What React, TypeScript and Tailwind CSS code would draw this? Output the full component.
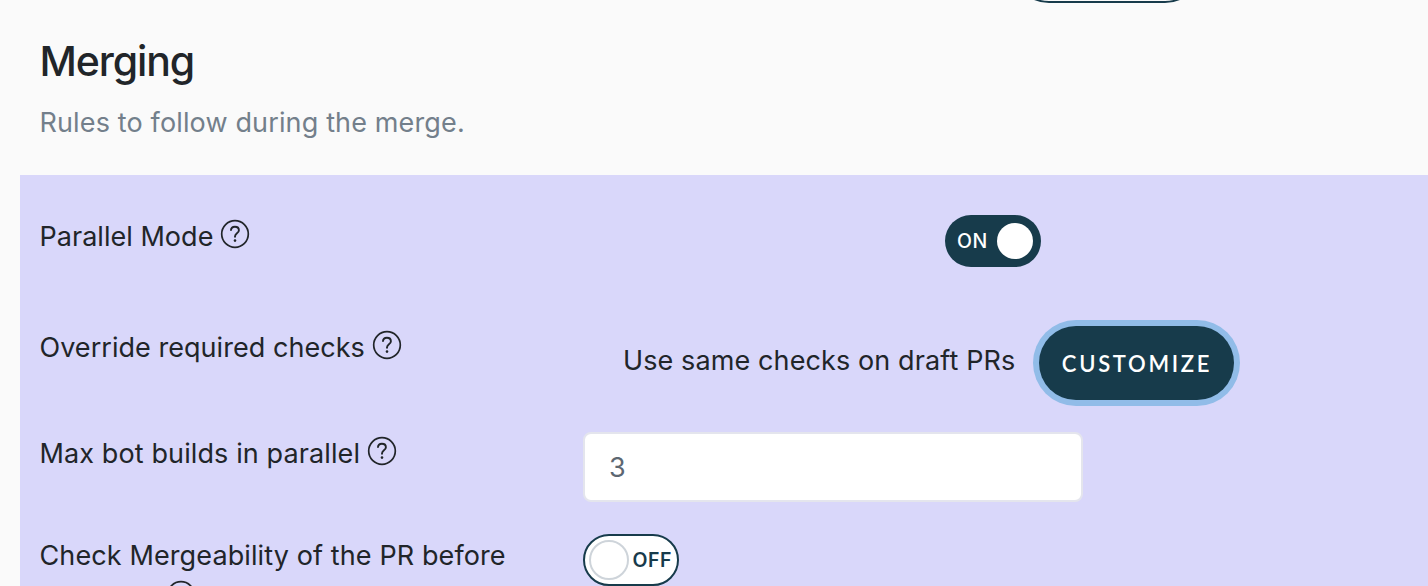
import React from "react";

function Help() {
  return (
    <svg width="30" height="30" viewBox="0 0 30 30" className="mb-1.5 shrink-0" fill="none" stroke="#212529">
      <circle cx="15" cy="15" r="13.3" strokeWidth="1.7" />
      <path d="M10.9 11.7C11 9.1 12.6 7.7 14.9 7.7C17.3 7.7 18.9 9.1 18.9 11.2C18.9 14.4 15 14.3 15 17.5V18.4" strokeWidth="1.9" />
      <circle cx="15" cy="21.6" r="1.3" fill="#212529" stroke="none" />
    </svg>
  );
}

export default function App() {
  return (
    <div className="h-[586px] w-full overflow-hidden bg-[#fafafa] font-['Inter',sans-serif] text-[27px] text-[#212529]">
      <div className="flex h-[3px] items-end pl-[1012px]">
        <div className="h-[74px] w-[190px] shrink-0 rounded-[37px] border-2 border-[#173b4b]" />
      </div>
      <header className="h-[172px] pl-[39.5px] pt-[33px]">
        <h1 className="text-[41px] font-medium leading-[50px] tracking-[-1.1px]">Merging</h1>
        <p className="mt-[17px] leading-[40px] tracking-[0.14px] text-[#737f8b]">Rules to follow during the merge.</p>
      </header>
      <main className="ml-5 h-[411px] overflow-hidden bg-[#d9d7fa] pl-[19.5px] pt-10">
        <div className="flex h-[111px] items-start">
          <div className="flex w-[905.5px] items-center gap-[7px] leading-[44px]">
            <span className="tracking-[0.03px]">Parallel Mode</span><Help />
          </div>
          <div className="flex h-[52px] w-24 items-center justify-between rounded-full bg-[#173b4b] pl-3 pr-2 text-[19.5px] font-medium tracking-[0.5px] text-white">
            <span className="pt-0.5">ON</span><span className="size-9 rounded-full bg-white" />
          </div>
        </div>
        <div className="flex h-[106px] items-start">
          <div className="flex w-[583.5px] items-center gap-[7px] leading-[44px]">
            <span className="tracking-[0.04px]">Override required checks</span><Help />
          </div>
          <span className="mt-[14px] w-[416px] whitespace-nowrap leading-[42px] tracking-[0.11px]">Use same checks on draft PRs</span>
          <button className="h-[74px] w-[195px] rounded-full bg-[#173b4b] pl-px pt-px font-['Lato',sans-serif] text-[22px] font-semibold tracking-[2.7px] text-white ring-6 ring-[#91bce8]">CUSTOMIZE</button>
        </div>
        <div className="flex h-[102px] items-start">
          <div className="flex w-[543.5px] items-center gap-[7px] leading-[44px]">
            <span className="tracking-[0.11px]">Max bot builds in parallel</span><Help />
          </div>
          <div className="flex h-[70px] w-[500px] items-center rounded-lg border-2 border-[#e4e5ed] bg-white pl-6 pt-0.5 text-[#5d6772]">3</div>
        </div>
        <div className="flex items-start">
          <div className="w-[543.5px]">
            <div className="leading-[44px] tracking-[0.11px]">Check Mergeability of the PR before</div>
            <div className="flex pl-[126px] pt-0.5"><Help /></div>
          </div>
          <div className="flex h-[52px] w-24 items-center justify-between rounded-full border-2 border-[#173b4b] bg-white pl-1 pr-[5px] text-[19.5px] font-semibold tracking-[0.5px] text-[#173b4b]">
            <span className="size-10 rounded-full border-2 border-[#ced4da]" /><span className="pt-0.5">OFF</span>
          </div>
        </div>
      </main>
    </div>
  );
}
